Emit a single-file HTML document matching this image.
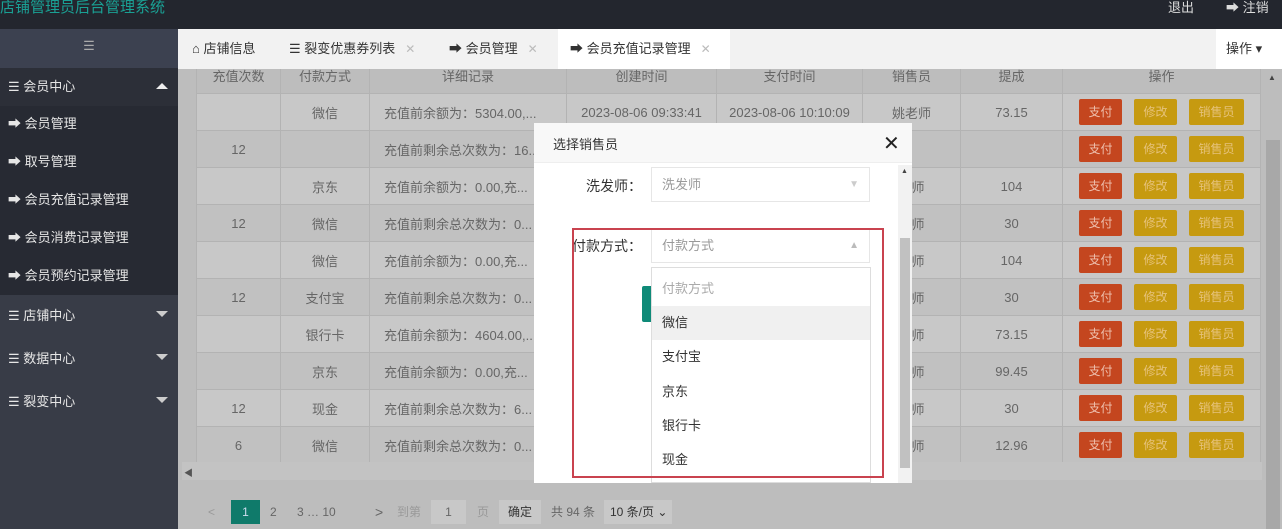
<!DOCTYPE html>
<html><head><meta charset="utf-8"><style>
*{margin:0;padding:0;box-sizing:border-box}
body{width:1282px;height:529px;overflow:hidden;position:relative;background:#bdbdbd;font-family:"Liberation Sans","Noto Sans CJK SC",sans-serif;font-size:13px;color:#555}
.abs{position:absolute}
#hd{left:0;top:0;width:1282px;height:29px;background:#23262e}
#side{left:0;top:29px;width:178px;height:500px;background:#383c47}
.si{position:absolute;left:0;width:178px;color:#e6e6e6;font-size:13px;padding-left:8px}
.tri{position:absolute;right:10px;width:0;height:0;border-left:6px solid transparent;border-right:6px solid transparent}
#tabs{left:178px;top:29px;width:1104px;height:40px;background:#f2f2f2}
.tab{position:absolute;top:0;height:40px;line-height:40px;font-size:13px;color:#333}
.x{color:#bbb;margin-left:10px;font-size:12px}
table{border-collapse:collapse;position:absolute;left:196px;top:57px}
td{border:1px solid #b3b3b3;height:37px;text-align:center;color:#666;font-size:13px;white-space:nowrap;overflow:hidden}
td.l{text-align:left;padding-left:14px}
tr:nth-child(odd) td{background:#c1c1c1}
tr:nth-child(even) td{background:#c8c8c8}
tr.h td{background:#bdbdbd;height:36px}
.b{display:inline-block;width:43px;height:26px;line-height:26px;font-size:12px;margin:0 6px;border-radius:2px}
.r{background:#c4461f;color:#eec0ae}.y{background:#c69a10;color:#e6c27a}
.y2{width:55px;background:#c69a10;color:#e6c27a}
#modal{left:534px;top:123px;width:378px;height:360px;background:#fff}
.sel{position:absolute;left:117px;width:219px;height:35px;border:1px solid #e6e6e6;color:#999;padding-left:10px;line-height:33px;font-size:13px}
.opt{position:absolute;left:0;width:218px;height:34px;line-height:34px;padding-left:10px;color:#333}
.pg{position:absolute;top:500px;height:24px;line-height:24px;font-size:12px;color:#666}
</style></head><body>
<div id="hd" class="abs"><span class="abs" style="left:0;top:-4px;color:#1aa094;font-size:15px">店铺管理员后台管理系统</span>
<span class="abs" style="left:1168px;top:-3px;color:#ddd;font-size:13px">退出</span>
<span class="abs" style="left:1226px;top:-3px;color:#ddd;font-size:13px">➡ 注销</span></div>
<div id="side" class="abs">
<div class="si" style="top:0;height:39px;background:#3c4150;text-align:center;padding:0;line-height:33px;color:#aaa">☰</div>
<div class="si" style="top:39px;height:38px;line-height:38px;background:#2c2f38">☰ 会员中心<span class="tri" style="top:15px;border-bottom:6px solid #eee"></span></div>
<div class="si" style="top:77px;height:189px;background:#272a33"></div>
<div class="si" style="top:84px">➡ 会员管理</div>
<div class="si" style="top:122px">➡ 取号管理</div>
<div class="si" style="top:160px">➡ 会员充值记录管理</div>
<div class="si" style="top:198px">➡ 会员消费记录管理</div>
<div class="si" style="top:236px">➡ 会员预约记录管理</div>
<div class="si" style="top:276px">☰ 店铺中心<span class="tri" style="top:6px;border-top:6px solid #ccc"></span></div>
<div class="si" style="top:319px">☰ 数据中心<span class="tri" style="top:6px;border-top:6px solid #ccc"></span></div>
<div class="si" style="top:362px">☰ 裂变中心<span class="tri" style="top:6px;border-top:6px solid #ccc"></span></div>
</div>
<table>
<tr class="h"><td style="width:84px">充值次数</td><td style="width:89px">付款方式</td><td style="width:197px">详细记录</td><td style="width:150px">创建时间</td><td style="width:146px">支付时间</td><td style="width:98px">销售员</td><td style="width:102px">提成</td><td style="width:198px">操作</td></tr>
<tr><td></td><td>微信</td><td class="l">充值前余额为：5304.00,...</td><td>2023-08-06 09:33:41</td><td>2023-08-06 10:10:09</td><td>姚老师</td><td>73.15</td><td><span class="b r">支付</span><span class="b y">修改</span><span class="b y2">销售员</span></td></tr>
<tr><td>12</td><td></td><td class="l">充值前剩余总次数为：16...</td><td></td><td></td><td></td><td></td><td><span class="b r">支付</span><span class="b y">修改</span><span class="b y2">销售员</span></td></tr>
<tr><td></td><td>京东</td><td class="l">充值前余额为：0.00,充...</td><td></td><td></td><td>老师</td><td>104</td><td><span class="b r">支付</span><span class="b y">修改</span><span class="b y2">销售员</span></td></tr>
<tr><td>12</td><td>微信</td><td class="l">充值前剩余总次数为：0...</td><td></td><td></td><td>老师</td><td>30</td><td><span class="b r">支付</span><span class="b y">修改</span><span class="b y2">销售员</span></td></tr>
<tr><td></td><td>微信</td><td class="l">充值前余额为：0.00,充...</td><td></td><td></td><td>老师</td><td>104</td><td><span class="b r">支付</span><span class="b y">修改</span><span class="b y2">销售员</span></td></tr>
<tr><td>12</td><td>支付宝</td><td class="l">充值前剩余总次数为：0...</td><td></td><td></td><td>老师</td><td>30</td><td><span class="b r">支付</span><span class="b y">修改</span><span class="b y2">销售员</span></td></tr>
<tr><td></td><td>银行卡</td><td class="l">充值前余额为：4604.00,...</td><td></td><td></td><td>老师</td><td>73.15</td><td><span class="b r">支付</span><span class="b y">修改</span><span class="b y2">销售员</span></td></tr>
<tr><td></td><td>京东</td><td class="l">充值前余额为：0.00,充...</td><td></td><td></td><td>老师</td><td>99.45</td><td><span class="b r">支付</span><span class="b y">修改</span><span class="b y2">销售员</span></td></tr>
<tr><td>12</td><td>现金</td><td class="l">充值前剩余总次数为：6...</td><td></td><td></td><td>老师</td><td>30</td><td><span class="b r">支付</span><span class="b y">修改</span><span class="b y2">销售员</span></td></tr>
<tr><td>6</td><td>微信</td><td class="l">充值前剩余总次数为：0...</td><td></td><td></td><td>老师</td><td>12.96</td><td><span class="b r">支付</span><span class="b y">修改</span><span class="b y2">销售员</span></td></tr>
</table>
<div class="abs" style="left:182px;top:462px;width:1080px;height:18px;background:#c3c3c3"></div>
<div class="abs" style="left:184px;top:466px;font-size:9px;color:#555">◀</div>
<div class="abs" style="left:1262px;top:69px;width:20px;height:460px;background:#bdbdbd"></div>
<div class="abs" style="left:1266px;top:140px;width:14px;height:389px;background:#a8a8a8"></div>
<div class="abs" style="left:1268px;top:73px;font-size:8px;color:#444">▲</div>
<div id="tabs" class="abs">
<div class="tab" style="left:14px">⌂ 店铺信息</div>
<div class="tab" style="left:111px">☰ 裂变优惠券列表<span class="x">✕</span></div>
<div class="tab" style="left:271px">➡ 会员管理<span class="x">✕</span></div>
<div class="tab" style="left:380px;width:172px;background:#fff;padding-left:12px">➡ 会员充值记录管理<span class="x">✕</span></div>
<div class="tab" style="left:1038px;width:66px;background:#fff;padding-left:10px">操作 ▾</div>
</div>
<div class="pg" style="left:208px;color:#999">&lt;</div>
<div class="pg" style="left:231px;width:29px;background:#0f7a6a;color:#cde;text-align:center">1</div>
<div class="pg" style="left:270px">2</div><div class="pg" style="left:297px">3 … 10</div>
<div class="pg" style="left:375px;font-size:14px">&gt;</div>
<div class="pg" style="left:397px;color:#999">到第</div>
<div class="pg" style="left:431px;width:35px;background:#c8c8c8;text-align:center">1</div>
<div class="pg" style="left:477px;color:#999">页</div>
<div class="pg" style="left:499px;width:42px;background:#c8c8c8;text-align:center;color:#333">确定</div>
<div class="pg" style="left:551px">共 94 条</div>
<div class="pg" style="left:604px;width:68px;background:#c8c8c8;padding-left:6px;color:#333">10 条/页 ⌄</div>
<div id="modal" class="abs">
<div class="abs" style="left:0;top:0;width:378px;height:40px;background:#f8f8f8;border-bottom:1px solid #eee"></div>
<div class="abs" style="left:19px;top:11px;color:#333;font-size:13px">选择销售员</div>
<div class="abs" style="left:349px;top:8px;color:#222;font-size:20px">✕</div>
<div class="abs" style="left:52px;top:53px;color:#333;font-size:14px">洗发师：</div>
<div class="sel" style="top:44px">洗发师<span class="abs" style="right:10px;top:0;color:#ccc;font-size:10px">▼</span></div>
<div class="abs" style="left:38px;top:113px;color:#333;font-size:14px">付款方式：</div>
<div class="sel" style="top:105px">付款方式<span class="abs" style="right:10px;top:0;color:#bbb;font-size:10px">▲</span></div>
<div class="abs" style="left:108px;top:163px;width:9px;height:36px;background:#0f8a78;border-radius:2px 0 0 2px"></div>
<div class="abs" style="left:117px;top:144px;width:220px;height:216px;border:1px solid #ddd;background:#fff">
<div class="opt" style="top:4px;color:#aaa">付款方式</div>
<div class="opt" style="top:38px;background:#f0f0f0">微信</div>
<div class="opt" style="top:72px">支付宝</div>
<div class="opt" style="top:107px">京东</div>
<div class="opt" style="top:141px">银行卡</div>
<div class="opt" style="top:175px">现金</div>
</div>
<div class="abs" style="left:364px;top:42px;width:14px;height:318px;background:#f2f2f2"></div>
<div class="abs" style="left:366px;top:115px;width:10px;height:230px;background:#c1c1c1"></div>
<div class="abs" style="left:367px;top:45px;font-size:7px;color:#444">▲</div>
<div class="abs" style="left:38px;top:105px;width:312px;height:250px;border:2px solid #c9434f"></div>
</div>
</body></html>
